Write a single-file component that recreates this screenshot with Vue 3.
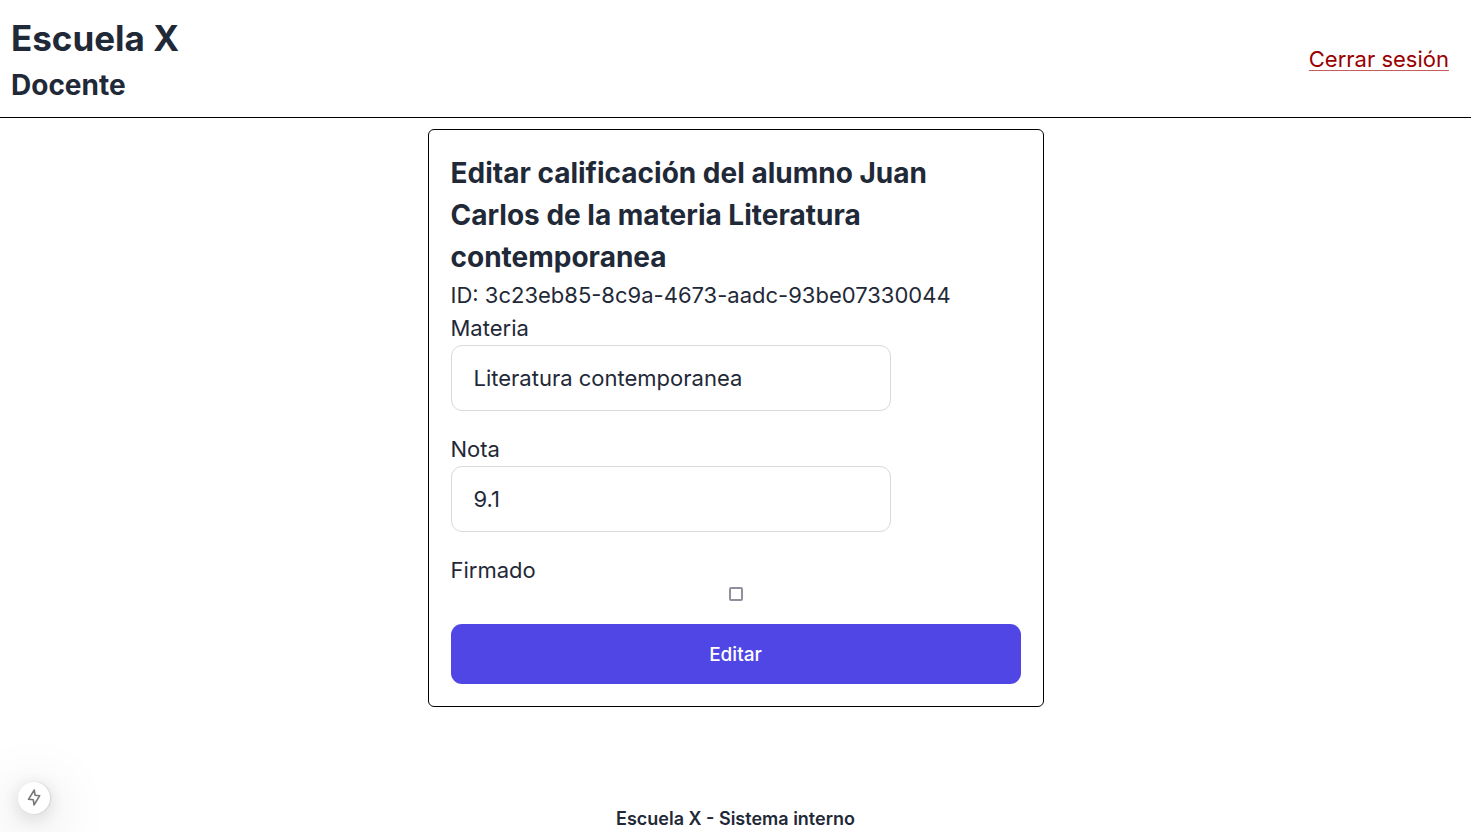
<script setup>
import { ref } from 'vue'

const subject = ref('Literatura contemporanea')
const grade = ref('9.1')
const signed = ref(false)
</script>

<template>
  <div class="page">
    <header class="top">
      <div>
        <h1>Escuela X</h1>
        <h2>Docente</h2>
      </div>
      <a class="logout" href="#">Cerrar sesión</a>
    </header>
    <main>
      <form class="card" @submit.prevent>
        <h2>Editar calificación del alumno Juan Carlos de la materia Literatura contemporanea</h2>
        <p>ID: 3c23eb85-8c9a-4673-aadc-93be07330044</p>
        <label for="subject">Materia</label>
        <input id="subject" v-model="subject" class="field" type="text" />
        <label for="grade">Nota</label>
        <input id="grade" v-model="grade" class="field" type="text" />
        <label for="signed">Firmado</label>
        <input id="signed" v-model="signed" class="check" type="checkbox" />
        <button class="submit" type="submit">Editar</button>
      </form>
    </main>
    <footer>Escuela X - Sistema interno</footer>
    <button class="dev" type="button" aria-label="Dev">
      <svg width="16" height="20" viewBox="0 0 16 20" fill="none" stroke="#777" stroke-width="1.6" stroke-linejoin="round">
        <path d="M8.300 2 L2.500 11.300 L7.300 11.800 L8 17 L13.700 7.700 L9 7.200 Z" />
      </svg>
    </button>
  </div>
</template>

<style>
body {
  margin: 0;
  background: #fff;
}
</style>

<style scoped>
.page {
  min-height: 100vh;
  display: flex;
  flex-direction: column;
  font-family: Inter, sans-serif;
  font-size: 22px;
  line-height: 33px;
  color: #1f2937;
}
.page * {
  box-sizing: border-box;
}
h1,
h2,
p {
  margin: 0;
}
.top {
  display: flex;
  justify-content: space-between;
  align-items: center;
  padding: 12px 22px 11px 11px;
  border-bottom: 1px solid #000;
}
h1 {
  font-size: 35px;
  line-height: 52px;
}
h2 {
  font-size: 28px;
  line-height: 42px;
}
.logout {
  color: #990000;
  text-decoration: underline 1px #c75c5c;
  text-underline-offset: 3px;
}
main {
  flex: 1;
  display: flex;
  justify-content: center;
  align-items: flex-start;
  padding: 11px;
}
.card {
  width: 100%;
  max-width: 616px;
  display: flex;
  flex-direction: column;
  padding: 22px;
  border: 1px solid #000;
  border-radius: 6px;
}
.card h2 {
  margin-bottom: 1px;
}
.field {
  width: 440px;
  max-width: 100%;
  height: 66px;
  margin: 0 0 22px;
  padding: 0 22px;
  border: 1px solid #d9d9d9;
  border-radius: 11px;
  background: #fff;
  font: inherit;
  color: inherit;
}
.check {
  appearance: none;
  align-self: center;
  width: 14px;
  height: 14px;
  margin: 0 0 23px;
  border: 2px solid #8f8f9d;
  border-radius: 2px;
}
.check:checked {
  background: #4f46e5;
}
.submit {
  height: 60px;
  padding: 2px 0 0;
  border: 0;
  border-radius: 11px;
  background: #4f46e5;
  color: #fff;
  font: 500 19px/28px Inter, sans-serif;
}
footer {
  text-align: center;
  font-size: 18px;
  font-weight: 600;
  line-height: 27px;
}
.dev {
  position: fixed;
  left: 18px;
  bottom: 18px;
  width: 32px;
  height: 32px;
  display: flex;
  align-items: center;
  justify-content: center;
  padding: 0;
  border: 0;
  border-radius: 50%;
  background: #fff;
  box-shadow: 1px 0 2px rgba(0, 0, 0, 0.12), 0 4px 20px rgba(0, 0, 0, 0.14), 0 11px 56px rgba(0, 0, 0, 0.25);
}
</style>
